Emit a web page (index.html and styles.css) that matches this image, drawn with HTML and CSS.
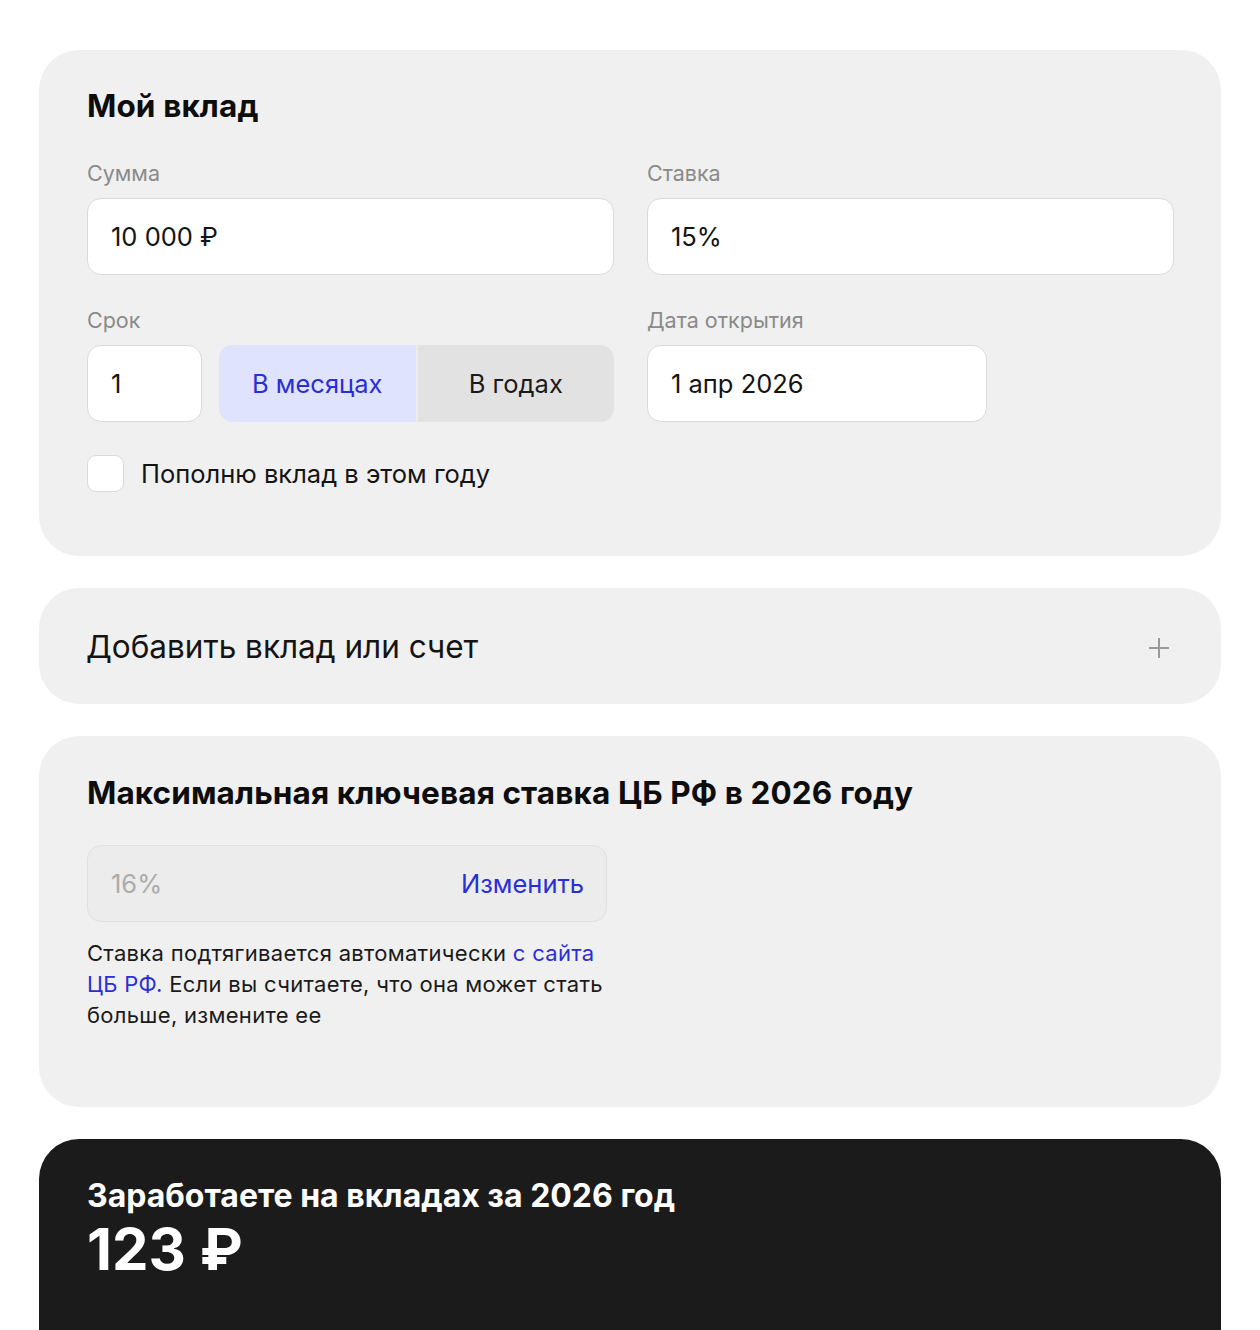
FILE: index.html
```html
<!DOCTYPE html>
<html lang="ru">
<head>
<meta charset="utf-8">
<title>Мой вклад</title>
<link rel="stylesheet" href="styles.css">
</head>
<body>
<main class="page">
  <section class="card deposit">
    <h2 class="card-title">Мой вклад</h2>
    <div class="grid">
      <div class="field">
        <div class="label">Сумма</div>
        <div class="input">10&nbsp;000&nbsp;₽</div>
      </div>
      <div class="field">
        <div class="label">Ставка</div>
        <div class="input">15%</div>
      </div>
      <div class="field">
        <div class="label">Срок</div>
        <div class="term-row">
          <div class="input input-small">1</div>
          <div class="toggle">
            <div class="toggle-item active">В месяцах</div>
            <div class="toggle-item">В годах</div>
          </div>
        </div>
      </div>
      <div class="field">
        <div class="label">Дата открытия</div>
        <div class="input input-date">1 апр 2026</div>
      </div>
    </div>
    <label class="check">
      <span class="checkbox"></span>
      <span class="check-text">Пополню вклад в этом году</span>
    </label>
  </section>

  <section class="card add">
    <span class="add-text">Добавить вклад или счет</span>
    <svg class="plus" width="24" height="24" viewBox="0 0 24 24" aria-hidden="true">
      <path d="M12 2v20M2 12h20" stroke="#9a9a9a" stroke-width="2" fill="none"/>
    </svg>
  </section>

  <section class="card key-rate">
    <h2 class="card-title">Максимальная ключевая ставка ЦБ РФ в 2026 году</h2>
    <div class="rate-input">
      <span class="rate-value">16%</span>
      <span class="rate-change">Изменить</span>
    </div>
    <p class="note"><span>Ставка подтягивается автоматически</span> <a class="link" href="#"><span>с сайта</span> <span>ЦБ РФ.</span></a> <span>Если вы считаете, что она может стать</span> <span>больше, измените ее</span></p>
  </section>

  <section class="card result">
    <div class="result-title">Заработаете на вкладах за 2026 год</div>
    <div class="result-sum">123 ₽</div>
  </section>
</main>
</body>
</html>
```

FILE: styles.css
```css
* { box-sizing: border-box; }
html, body { margin: 0; padding: 0; background: #fff; }
body {
  font-family: Inter, Roboto, "Noto Sans", Arial, sans-serif;
  color: #111;
  -webkit-font-smoothing: antialiased;
}
.page {
  padding: 50px 39px 0 39px;
  display: flex;
  flex-direction: column;
  gap: 32px;
}
.card {
  background: #f0f0f0;
  border-radius: 40px;
  padding: 0 47px 0 48px;
}
.card-title {
  margin: 0;
  font-size: 31.5px;
  font-weight: 700;
  line-height: 36px;
  color: #0d0d0d;
  letter-spacing: 0.1px;
}
.deposit { padding-top: 38px; padding-bottom: 64px; }
.grid {
  margin-top: 37px;
  display: grid;
  grid-template-columns: 1fr 1fr;
  column-gap: 33px;
  row-gap: 33px;
}
.field { display: flex; flex-direction: column; }
.label {
  font-size: 21.5px;
  line-height: 24px;
  color: #8a8a8a;
  margin-bottom: 13px;
}
.input {
  height: 77px;
  background: #fff;
  border: 1.5px solid #dadada;
  border-radius: 14px;
  display: flex;
  align-items: center;
  padding: 0 23px;
  font-size: 25.5px;
  color: #141414;
}
.term-row { display: flex; gap: 17px; }
.input-small { width: 115px; flex: none; }
.toggle {
  flex: 1;
  display: flex;
  height: 77px;
  border-radius: 14px;
  overflow: hidden;
  background: #e2e2e2;
}
.toggle-item {
  flex: 1;
  display: flex;
  align-items: center;
  justify-content: center;
  font-size: 25.5px;
  color: #1a1a1a;
}
.toggle-item.active {
  background: #dfe3fd;
  color: #2a2ed6;
  border-right: 2px solid #ececec;
}
.input-date { width: 340px; }
.check {
  margin-top: 33px;
  display: flex;
  align-items: center;
  gap: 17px;
}
.checkbox {
  width: 37px;
  height: 37px;
  background: #fff;
  border: 1.5px solid #dadada;
  border-radius: 9px;
  flex: none;
}
.check-text { font-size: 25.5px; color: #141414; }

.add {
  height: 116px;
  display: flex;
  align-items: center;
  justify-content: space-between;
  padding-left: 47px;
  padding-right: 50px;
}
.add-text { font-size: 31.5px; color: #141414; }
.plus { margin-top: 3px; }

.key-rate { padding-top: 39px; padding-bottom: 76px; }
.rate-input {
  margin-top: 34px;
  width: 520px;
  height: 77px;
  background: #ececec;
  border: 1.5px solid #e0e0e0;
  border-radius: 14px;
  display: flex;
  align-items: center;
  justify-content: space-between;
  padding: 0 22px 0 23px;
  font-size: 25.5px;
}
.rate-value { color: #ababab; }
.rate-change { color: #2a2ed6; }
.note {
  margin: 16px 0 0 0;
  width: 530px;
  font-size: 22px;
  line-height: 31px;
  letter-spacing: 0.3px;
  color: #1a1a1a;
}
.link { color: #2a2ed6; text-decoration: none; }

.result {
  background: #1b1b1b;
  color: #fff;
  padding-top: 39px;
  min-height: 200px;
  border-radius: 40px 40px 0 0;
}
.result-title { font-size: 32px; font-weight: 700; line-height: 36px; }
.result-sum { font-size: 58px; font-weight: 700; line-height: 64px; margin-top: 3px; }
```
